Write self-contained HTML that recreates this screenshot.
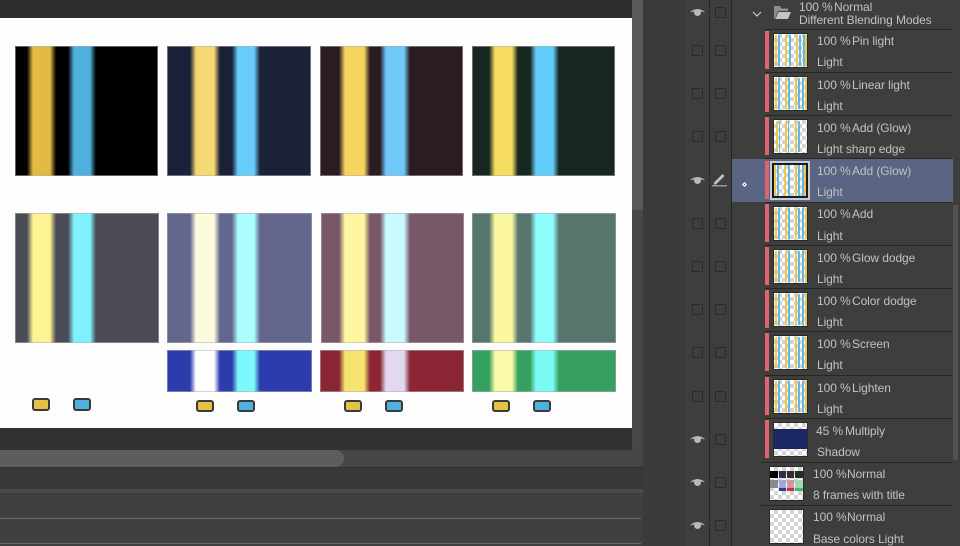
<!DOCTYPE html>
<html><head><meta charset="utf-8">
<style>
html,body{margin:0;padding:0;background:#3c3c3a}
#a{position:relative;width:960px;height:546px;overflow:hidden;background:#3b3b39;font-family:"Liberation Sans",sans-serif;color:#c2c2c0;font-size:12px;line-height:14px;letter-spacing:-.08px}
#a div,#a svg{position:absolute}
.p{box-sizing:border-box;border:1px solid rgba(175,175,175,.55);background-origin:border-box;background-image:linear-gradient(90deg,var(--b) calc(var(--a) - 3px),var(--y) calc(var(--a) + 3px),var(--y) calc(var(--c) - 3px),var(--b) calc(var(--c) + 3px),var(--b) calc(var(--d) - 3px),var(--k) calc(var(--d) + 3px),var(--k) calc(var(--e) - 3px),var(--b) calc(var(--e) + 3px))}
.s{box-sizing:border-box;border:2px solid #3a3a38;border-radius:3px;height:13px;width:18px}
.yy{background:#e4c245}.bb{background:#4fb1e0}
.r{left:732px;width:220px;height:43px}
.l{left:33px;top:0;height:1px;width:187px;background:#262624}
.bar{left:33px;top:2px;width:4px;height:38px;background:#de6472}
.th{left:41px;top:4px;width:35px;height:35px;box-sizing:border-box;background-color:#fff;background-image:linear-gradient(45deg,#d4d4d4 25%,transparent 25%,transparent 75%,#d4d4d4 75%),linear-gradient(45deg,#d4d4d4 25%,transparent 25%,transparent 75%,#d4d4d4 75%);background-size:8px 8px;background-position:0 0,4px 4px;border:1px solid #2a2a2a}
.t{white-space:nowrap;filter:blur(.25px)}
.o{left:85px;top:6px}.m{left:120px;top:6px}.n{left:85px;top:27px}
.q{width:11px;height:11px;box-sizing:border-box;border:1px solid #2a2a28;border-radius:1px}
.e{left:689px;width:17px;height:11px}
.z{left:42px;top:7px;opacity:.9}
</style></head><body><div id="a">
<div style="left:0;top:0;width:632px;height:18px;background:#2e2e2c"></div>
<div style="left:0;top:18px;width:632px;height:410px;background:#fdfdfd"></div>
<div style="left:0;top:428px;width:643px;height:22px;background:#313130"></div>
<div style="left:632px;top:0;width:11px;height:210px;background:#5a5a5b"></div>
<div style="left:632px;top:210px;width:11px;height:258px;background:#474747"></div>
<div style="left:0;top:450px;width:643px;height:18px;background:#464646"></div>
<div style="left:0;top:450px;width:344px;height:17px;background:#5d5d5d;border-radius:0 8px 8px 0"></div>
<div style="left:0;top:467px;width:643px;height:22px;background:#383836;border-top:1px solid #2e2e30;box-sizing:border-box"></div>
<div style="left:0;top:489px;width:643px;height:57px;background:#404040"></div>
<div style="left:0;top:489px;width:643px;height:4px;background:#4a4a4a"></div>
<div style="left:0;top:518px;width:641px;height:1px;background:#6a6a6a"></div>
<div style="left:0;top:543px;width:641px;height:1px;background:#6a6a6a"></div>

<div class="p" style="left:15px;top:46px;width:143px;height:130px;--b:#000;--y:#e3bb44;--k:#4fb0de;--a:15px;--c:38px;--d:56px;--e:78px"></div>
<div class="p" style="left:167px;top:46px;width:144px;height:130px;--b:#1b2138;--y:#f5d872;--k:#68cdfb;--a:26px;--c:50px;--d:68px;--e:90px"></div>
<div class="p" style="left:320px;top:46px;width:143px;height:130px;--b:#2a1c20;--y:#f5d45f;--k:#6ec8f8;--a:22px;--c:47px;--d:63px;--e:87px"></div>
<div class="p" style="left:472px;top:46px;width:143px;height:130px;--b:#17261f;--y:#f5db5e;--k:#62cdfb;--a:20px;--c:43px;--d:61px;--e:84px"></div>

<div class="p" style="left:15px;top:213px;width:144px;height:130px;--b:#4b4c55;--y:#fdf294;--k:#80f2fe;--a:15px;--c:38px;--d:56px;--e:78px"></div>
<div class="p" style="left:167px;top:213px;width:145px;height:130px;--b:#63678e;--y:#fdfbdc;--k:#aafffe;--a:26px;--c:50px;--d:68px;--e:90px"></div>
<div class="p" style="left:321px;top:213px;width:143px;height:130px;--b:#785868;--y:#fff7a0;--k:#c8fafe;--a:21px;--c:46px;--d:62px;--e:86px"></div>
<div class="p" style="left:472px;top:213px;width:144px;height:130px;--b:#56756d;--y:#fbf8a0;--k:#8ffcfc;--a:20px;--c:43px;--d:61px;--e:84px"></div>

<div class="p" style="left:167px;top:350px;width:145px;height:42px;--b:#2d3cad;--y:#fff;--k:#7cf9fa;--a:26px;--c:50px;--d:68px;--e:90px"></div>
<div class="p" style="left:320px;top:350px;width:144px;height:42px;--b:#8a2534;--y:#f5e570;--k:#e2d8f0;--a:22px;--c:47px;--d:63px;--e:87px"></div>
<div class="p" style="left:472px;top:350px;width:144px;height:42px;--b:#35a05f;--y:#fafaa8;--k:#7cfbf5;--a:20px;--c:43px;--d:61px;--e:84px"></div>

<div class="s yy" style="left:32px;top:398px"></div><div class="s bb" style="left:73px;top:398px"></div>
<div class="s yy" style="left:196px;top:400px;height:12px"></div><div class="s bb" style="left:237px;top:400px;height:12px"></div>
<div class="s yy" style="left:344px;top:400px;height:12px"></div><div class="s bb" style="left:385px;top:400px;height:12px"></div>
<div class="s yy" style="left:492px;top:400px;height:12px"></div><div class="s bb" style="left:533px;top:400px;height:12px"></div>

<!-- layer panel -->
<div style="left:686px;top:0;width:274px;height:546px;background:#3e3e3c"></div>
<div style="left:709px;top:0;width:1px;height:546px;background:#272725"></div>
<div style="left:731px;top:0;width:1px;height:546px;background:#272725"></div>
<div style="left:953px;top:205px;width:5px;height:255px;background:#525252"></div>

<!-- folder row -->
<svg style="left:752px;top:11px" width="10" height="7" viewBox="0 0 10 7"><path d="M1 1l4 4 4-4" fill="none" stroke="#c8c8c8" stroke-width="1.2"/></svg>
<svg style="left:773px;top:5px" width="18" height="15" viewBox="0 0 18 15"><path d="M1 14V1h6l1.500 2.500H15V6H5L2 14z" fill="#8d8d8b"/><path d="M2.500 14l3-7H18l-3 7z" fill="#c4c4c2"/></svg>
<div class="t" style="left:799px;top:0">100 %</div><div class="t" style="left:834px;top:0">Normal</div>
<div class="t" style="left:799px;top:13px">Different Blending Modes</div>

<!-- rows -->
<div class="r" style="top:29px"><div class="l"></div><div class="bar"></div><div class="th"></div>
<svg class="z" style="top:6px" width="33" height="31"><g fill="#f0c63e"><rect x="1" width="2" height="31"/><rect x="11" width="2" height="31"/><rect x="22" width="2" height="31"/><rect x="31" width="2" height="31"/></g><g fill="#55b4e6"><rect x="4" width="2" height="31"/><rect x="15" width="2" height="31"/><rect x="25" width="2" height="31"/><rect x="29" width="2" height="31"/></g></svg>
<div class="t o" style="top:5px">100 %</div><div class="t m" style="top:5px">Pin light</div><div class="t n" style="top:26px">Light</div></div>

<div class="r" style="top:72px"><div class="l"></div><div class="bar"></div><div class="th"></div>
<svg class="z" style="top:6px" width="33" height="31"><g fill="#f0c63e"><rect x="1" width="2" height="31"/><rect x="11" width="2" height="31"/><rect x="21" width="2" height="31"/><rect x="31" width="2" height="31"/></g><g fill="#55b4e6"><rect x="4" width="2" height="31"/><rect x="14" width="2" height="31"/><rect x="24" width="2" height="31"/><rect x="28" width="2" height="31"/></g></svg>
<div class="t o">100 %</div><div class="t m">Linear light</div><div class="t n">Light</div></div>

<div class="r" style="top:115px"><div class="l"></div><div class="bar"></div><div class="th"></div>
<svg class="z" style="top:6px" width="33" height="31"><g fill="#f0c63e"><rect x="2" width="2" height="31"/><rect x="11" width="2" height="31"/><rect x="21" width="2" height="31"/></g><g fill="#55b4e6"><rect x="5" width="1" height="31"/><rect x="14" width="1" height="31"/><rect x="24" width="2" height="31"/></g></svg>
<div class="t o">100 %</div><div class="t m">Add (Glow)</div><div class="t n">Light sharp edge</div></div>

<div class="r" style="top:159px;height:43px;background:#5a6583;left:732px;width:221px"></div>
<div class="r" style="top:158px"><div class="l"></div><div class="bar" style="top:3px"></div>
<div style="left:38px;top:3px;width:40px;height:39px;background:#c8ccd6"></div>
<div class="th" style="left:40px;top:5px;width:36px;height:35px;border:2px solid #1c1c1c"></div>
<svg class="z" style="top:7px" width="32" height="31"><g fill="#f0c63e"><rect x="0" width="2" height="31"/><rect x="10" width="2" height="31"/><rect x="21" width="2" height="31"/><rect x="30" width="2" height="31"/></g><g fill="#55b4e6"><rect x="3" width="2" height="31"/><rect x="14" width="2" height="31"/><rect x="24" width="2" height="31"/><rect x="28" width="2" height="31"/></g></svg>
<div class="t o">100 %</div><div class="t m">Add (Glow)</div><div class="t n">Light</div></div>

<div class="r" style="top:202px"><div class="l"></div><div class="bar"></div><div class="th"></div>
<svg class="z" style="top:6px" width="33" height="31"><g fill="#f0c63e"><rect x="1" width="2" height="31"/><rect x="11" width="2" height="31"/><rect x="21" width="2" height="31"/><rect x="31" width="2" height="31"/></g><g fill="#55b4e6"><rect x="4" width="2" height="31"/><rect x="14" width="2" height="31"/><rect x="24" width="2" height="31"/><rect x="28" width="2" height="31"/></g></svg>
<div class="t o" style="top:5px">100 %</div><div class="t m" style="top:5px">Add</div><div class="t n">Light</div></div>

<div class="r" style="top:245px"><div class="l"></div><div class="bar"></div><div class="th"></div>
<svg class="z" style="top:6px" width="33" height="31"><g fill="#f0c63e"><rect x="1" width="2" height="31"/><rect x="11" width="2" height="31"/><rect x="21" width="2" height="31"/><rect x="31" width="2" height="31"/></g><g fill="#55b4e6"><rect x="4" width="2" height="31"/><rect x="14" width="2" height="31"/><rect x="24" width="2" height="31"/><rect x="28" width="2" height="31"/></g></svg>
<div class="t o">100 %</div><div class="t m">Glow dodge</div><div class="t n">Light</div></div>

<div class="r" style="top:288px"><div class="l"></div><div class="bar"></div><div class="th"></div>
<svg class="z" style="top:6px" width="33" height="31"><g fill="#f0c63e"><rect x="1" width="2" height="31"/><rect x="11" width="2" height="31"/><rect x="21" width="2" height="31"/><rect x="31" width="2" height="31"/></g><g fill="#55b4e6"><rect x="4" width="2" height="31"/><rect x="14" width="2" height="31"/><rect x="24" width="2" height="31"/><rect x="28" width="2" height="31"/></g></svg>
<div class="t o">100 %</div><div class="t m">Color dodge</div><div class="t n">Light</div></div>

<div class="r" style="top:331px"><div class="l"></div><div class="bar"></div><div class="th"></div>
<svg class="z" style="top:6px" width="33" height="31"><g fill="#f0c63e"><rect x="1" width="2" height="31"/><rect x="11" width="2" height="31"/><rect x="21" width="2" height="31"/><rect x="31" width="2" height="31"/></g><g fill="#55b4e6"><rect x="4" width="2" height="31"/><rect x="14" width="2" height="31"/><rect x="24" width="2" height="31"/><rect x="28" width="2" height="31"/></g></svg>
<div class="t o">100 %</div><div class="t m">Screen</div><div class="t n">Light</div></div>

<div class="r" style="top:375px"><div class="l"></div><div class="bar"></div><div class="th"></div>
<svg class="z" style="top:6px" width="33" height="31"><g fill="#f0c63e"><rect x="1" width="2" height="31"/><rect x="11" width="2" height="31"/><rect x="21" width="2" height="31"/><rect x="31" width="2" height="31"/></g><g fill="#55b4e6"><rect x="4" width="2" height="31"/><rect x="14" width="2" height="31"/><rect x="24" width="2" height="31"/><rect x="28" width="2" height="31"/></g></svg>
<div class="t o">100 %</div><div class="t m">Lighten</div><div class="t n">Light</div></div>

<div class="r" style="top:418px"><div class="l"></div><div class="bar"></div><div class="th"></div>
<div style="left:42px;top:11px;width:33px;height:20px;background:#1c2765"></div>
<div class="t o" style="left:84px">45 %</div><div class="t m" style="left:113px">Multiply</div><div class="t n">Shadow</div></div>

<div class="r" style="top:462px"><div class="l" style="left:29px;width:191px"></div>
<div class="th" style="left:37px"></div>
<svg style="left:38px;top:5px" width="33" height="33"><rect x="0" y="4" width="8" height="7" fill="#000"/><rect x="9" y="4" width="7" height="7" fill="#2b3150"/><rect x="17" y="4" width="7" height="7" fill="#3a2a2c"/><rect x="25" y="4" width="8" height="7" fill="#1d3028"/><rect x="0" y="13" width="8" height="8" fill="#8a8a8e"/><rect x="9" y="13" width="7" height="8" fill="#a4a8d4"/><rect x="17" y="13" width="7" height="8" fill="#c89aa0"/><rect x="25" y="13" width="8" height="8" fill="#9fd8b4"/><rect x="9" y="21" width="7" height="3" fill="#2d3cad"/><rect x="17" y="21" width="7" height="3" fill="#e02838"/><rect x="25" y="21" width="8" height="3" fill="#35c070"/></svg>
<div class="t o" style="left:81px;top:5px">100 %</div><div class="t m" style="left:115px;top:5px">Normal</div><div class="t n" style="left:81px;top:26px">8 frames with title</div></div>

<div class="r" style="top:505px"><div class="l" style="left:29px;width:191px"></div>
<div class="th" style="left:37px"></div>
<div class="t o" style="left:81px;top:5px">100 %</div><div class="t m" style="left:115px;top:5px">Normal</div><div class="t n" style="left:81px">Base colors Light</div></div>

<!-- eyes -->
<svg class="e" style="top:6px" viewBox="0 0 17 11"><path d="M1 7C3 2 14 2 16 7C14 4.500 3 4.500 1 7z" fill="#c4c4c4"/><circle cx="8.500" cy="6.500" r="3.500" fill="#b8b8b8"/></svg>
<svg class="e" style="top:174px" viewBox="0 0 17 11"><path d="M1 7C3 2 14 2 16 7C14 4.500 3 4.500 1 7z" fill="#c4c4c4"/><circle cx="8.500" cy="6.500" r="3.500" fill="#b8b8b8"/></svg>
<svg class="e" style="top:433px" viewBox="0 0 17 11"><path d="M1 7C3 2 14 2 16 7C14 4.500 3 4.500 1 7z" fill="#c4c4c4"/><circle cx="8.500" cy="6.500" r="3.500" fill="#b8b8b8"/></svg>
<svg class="e" style="top:476px" viewBox="0 0 17 11"><path d="M1 7C3 2 14 2 16 7C14 4.500 3 4.500 1 7z" fill="#c4c4c4"/><circle cx="8.500" cy="6.500" r="3.500" fill="#b8b8b8"/></svg>
<svg class="e" style="top:519px" viewBox="0 0 17 11"><path d="M1 7C3 2 14 2 16 7C14 4.500 3 4.500 1 7z" fill="#c4c4c4"/><circle cx="8.500" cy="6.500" r="3.500" fill="#b8b8b8"/></svg>

<!-- first column boxes -->
<div class="q" style="left:692px;top:45px"></div><div class="q" style="left:692px;top:88px"></div><div class="q" style="left:692px;top:131px"></div>
<div class="q" style="left:692px;top:218px"></div><div class="q" style="left:692px;top:261px"></div><div class="q" style="left:692px;top:304px"></div><div class="q" style="left:692px;top:347px"></div><div class="q" style="left:692px;top:391px"></div>
<!-- second column boxes -->
<div class="q" style="left:715px;top:7px"></div><div class="q" style="left:715px;top:45px"></div><div class="q" style="left:715px;top:88px"></div><div class="q" style="left:715px;top:131px"></div>
<div class="q" style="left:715px;top:218px"></div><div class="q" style="left:715px;top:261px"></div><div class="q" style="left:715px;top:304px"></div><div class="q" style="left:715px;top:347px"></div><div class="q" style="left:715px;top:391px"></div>
<div class="q" style="left:715px;top:434px"></div><div class="q" style="left:715px;top:477px"></div><div class="q" style="left:715px;top:520px"></div>

<!-- pencil -->
<svg style="left:712px;top:172px" width="15" height="15" viewBox="0 0 15 15"><path d="M2 10.500L10.500 2l2 2L4 12.500H2z" fill="#c0c0c0"/><rect x="0" y="13" width="15" height="1.500" fill="#9a9a9a"/></svg>
<!-- layer marker -->
<svg style="left:742px;top:182px" width="5" height="5" viewBox="0 0 5 5"><path d="M2.500 0L5 2.500 2.500 5 0 2.500z" fill="#fff"/><circle cx="2.500" cy="2.500" r=".7" fill="#555"/></svg>
</div></body></html>
